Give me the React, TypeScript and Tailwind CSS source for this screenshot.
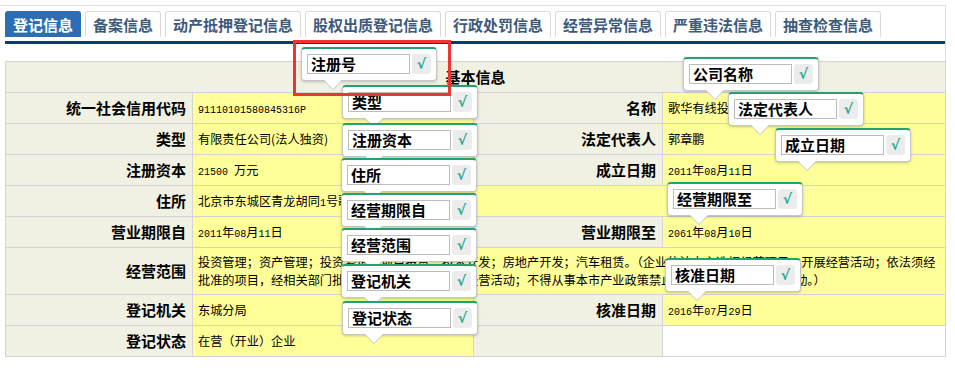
import React from 'react';

const tabs = ['登记信息', '备案信息', '动产抵押登记信息', '股权出质登记信息', '行政处罚信息', '经营异常信息', '严重违法信息', '抽查检查信息'];

const tips: { label: string; x: number; y: number }[] = [
  { label: '注册号', x: 301, y: 42 },
  { label: '类型', x: 342, y: 80 },
  { label: '注册资本', x: 342, y: 118 },
  { label: '住所', x: 341, y: 153 },
  { label: '经营期限自', x: 341, y: 188 },
  { label: '经营范围', x: 341, y: 223 },
  { label: '登记机关', x: 341, y: 259 },
  { label: '登记状态', x: 342, y: 296 },
  { label: '公司名称', x: 683, y: 52 },
  { label: '法定代表人', x: 728, y: 87 },
  { label: '成立日期', x: 775, y: 123 },
  { label: '经营期限至', x: 667, y: 177 },
  { label: '核准日期', x: 665, y: 253 },
];

// digits / latin in the value cells are narrow, like a bitmap song font
function Txt({ text }: { text: string }) {
  const parts = text.split(/([0-9A-Za-z ]+)/);
  return (
    <>
      {parts.map((p, i) =>
        /^[0-9A-Za-z ]+$/.test(p) ? (
          <span key={i} className="font-['Liberation_Mono',monospace] text-[10px] whitespace-pre">
            {p}
          </span>
        ) : (
          <span key={i}>{p}</span>
        ),
      )}
    </>
  );
}

function Label({ children }: { children?: React.ReactNode }) {
  return (
    <td className="h-[31px] bg-[#f1f1e3] border border-[#d4d4d4] pr-[6px] text-right text-[15px] font-bold text-black">
      {children}
    </td>
  );
}

function Value({ text, span = 1, white = false }: { text?: string; span?: number; white?: boolean }) {
  return (
    <td
      colSpan={span}
      className={`h-[31px] border border-[#d4d4d4] pl-[5px] text-[12.2px] text-black ${white ? 'bg-white' : 'bg-[#ffff99]'}`}
    >
      {text && <Txt text={text} />}
    </td>
  );
}

function Tip({ label, x, y }: { label: string; x: number; y: number }) {
  return (
    <div className="absolute w-[136px] h-[44px]" style={{ left: x, top: y }}>
      <div className="h-[34px] rounded-[4px] bg-white border border-[#c6c6c6] border-t-2 border-t-[#23a26e] shadow-[0_1px_3px_rgba(0,0,0,0.22)]">
        <div className="flex items-center gap-[2px] pl-[5px] pt-[5px]">
          <div className="w-[103px] h-[20px] border border-[#bcbcbc] bg-white pl-[3px] text-[15px] font-bold leading-[18px] text-black">
            {label}
          </div>
          <div className="w-[19px] h-[20px] rounded-[3px] bg-[#ececec] flex items-center justify-center text-[14px] font-bold text-[#25a98c] font-['DejaVu_Sans',sans-serif]">
            √
          </div>
        </div>
      </div>
      {/* pointer under the bubble */}
      <svg className="absolute left-[22px] top-[32px]" width="20" height="12" viewBox="0 0 20 12">
        <polygon points="0,0 20,0 10,11" fill="#ffffff" />
        <polyline points="0.5,1 10,10.5 19.5,1" fill="none" stroke="#c2c2c2" strokeWidth="1" />
      </svg>
    </div>
  );
}

export default function App() {
  return (
    <div className="relative min-h-[371px] bg-white font-['Noto_Sans_CJK_SC',sans-serif]">
      <div className="w-[946px] mt-[5px] border-t border-r border-[#dcdcdc] pl-[5px] pt-[5px]">
        <div className="flex gap-[4px]">
          {tabs.map((t, i) => (
            <div
              key={t}
              className={`h-[26px] px-[7px] rounded-t-[3px] border border-b-0 text-[15px] font-bold leading-[25px] ${
                i === 0 ? 'bg-[#2c6db3] border-[#2c6db3] text-white' : 'bg-white border-[#d9d9d9] text-[#3d5a7d]'
              }`}
            >
              {t}
            </div>
          ))}
        </div>
        <div className="mt-[4px] h-[3px] w-[940px] bg-[#0c3b6d]" />

        <table className="mt-[17px] w-[940px] table-fixed border-collapse">
          <colgroup>
            <col className="w-[187px]" />
            <col className="w-[281px]" />
            <col className="w-[189px]" />
            <col className="w-[283px]" />
          </colgroup>
          <tbody>
            <tr>
              <td colSpan={4} className="h-[31px] bg-[#f1f1e3] border border-[#d4d4d4] text-center text-[15px] font-bold text-black">
                基本信息
              </td>
            </tr>
            <tr>
              <Label>统一社会信用代码</Label>
              <Value text="91110101580845316P" />
              <Label>名称</Label>
              <Value text="歌华有线投资管理有限公司" />
            </tr>
            <tr>
              <Label>类型</Label>
              <Value text="有限责任公司(法人独资)" />
              <Label>法定代表人</Label>
              <Value text="郭章鹏" />
            </tr>
            <tr>
              <Label>注册资本</Label>
              <Value text="21500 万元" />
              <Label>成立日期</Label>
              <Value text="2011年08月11日" />
            </tr>
            <tr>
              <Label>住所</Label>
              <Value text="北京市东城区青龙胡同1号歌华大厦" span={3} />
            </tr>
            <tr>
              <Label>营业期限自</Label>
              <Value text="2011年08月11日" />
              <Label>营业期限至</Label>
              <Value text="2061年08月10日" />
            </tr>
            <tr>
              <Label>经营范围</Label>
              <td colSpan={3} className="h-[47px] border border-[#d4d4d4] bg-[#ffff99] pl-[5px] text-[12.2px] leading-[18px] text-black whitespace-nowrap">
                投资管理；资产管理；投资咨询；项目投资；技术开发；房地产开发；汽车租赁。（企业依法自主选择经营项目，开展经营活动；依法须经
                <br />
                批准的项目，经相关部门批准后依批准的内容开展经营活动；不得从事本市产业政策禁止和限制类项目的经营活动。）
              </td>
            </tr>
            <tr>
              <Label>登记机关</Label>
              <Value text="东城分局" />
              <Label>核准日期</Label>
              <Value text="2016年07月29日" />
            </tr>
            <tr>
              <Label>登记状态</Label>
              <Value text="在营（开业）企业" />
              <Label />
              <Value white />
            </tr>
          </tbody>
        </table>
      </div>

      {tips.map((t) => (
        <Tip key={t.label} {...t} />
      ))}

      <div className="absolute left-[293px] top-[35px] w-[158px] h-[56px] border-[3px] border-[#ee3535]" />
    </div>
  );
}
